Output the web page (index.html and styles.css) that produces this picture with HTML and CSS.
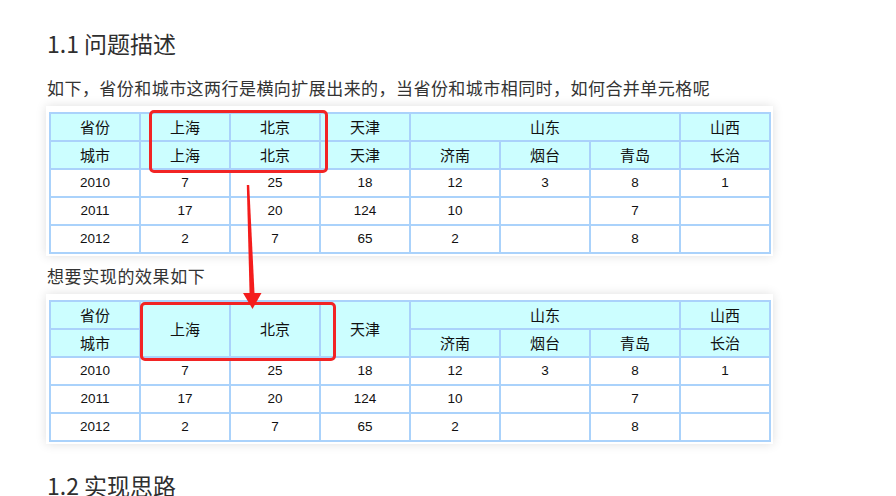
FILE: index.html
```html
<!DOCTYPE html>
<html lang="zh-CN">
<head>
<meta charset="utf-8">
<link rel="stylesheet" href="styles.css">
</head>
<body>
<div class="page">
  <h2 class="heading first">1.1 问题描述</h2>
  <p class="para p1">如下，省份和城市这两行是横向扩展出来的，当省份和城市相同时，如何合并单元格呢</p>
  <div class="figure f1">
    <table class="grid">
      <colgroup><col><col><col><col><col><col><col><col></colgroup>
      <tr class="head"><td>省份</td><td>上海</td><td>北京</td><td>天津</td><td colspan="3">山东</td><td>山西</td></tr>
      <tr class="head"><td>城市</td><td>上海</td><td>北京</td><td>天津</td><td>济南</td><td>烟台</td><td>青岛</td><td>长治</td></tr>
      <tr><td class="n">2010</td><td class="n">7</td><td class="n">25</td><td class="n">18</td><td class="n">12</td><td class="n">3</td><td class="n">8</td><td class="n">1</td></tr>
      <tr><td class="n">2011</td><td class="n">17</td><td class="n">20</td><td class="n">124</td><td class="n">10</td><td class="n"></td><td class="n">7</td><td class="n"></td></tr>
      <tr><td class="n">2012</td><td class="n">2</td><td class="n">7</td><td class="n">65</td><td class="n">2</td><td class="n"></td><td class="n">8</td><td class="n"></td></tr>
    </table>
    <div class="mark mark1"></div>
  </div>
  <p class="para p2">想要实现的效果如下</p>
  <div class="figure f2">
    <table class="grid">
      <colgroup><col><col><col><col><col><col><col><col></colgroup>
      <tr class="head"><td>省份</td><td rowspan="2">上海</td><td rowspan="2">北京</td><td rowspan="2">天津</td><td colspan="3">山东</td><td>山西</td></tr>
      <tr class="head"><td>城市</td><td>济南</td><td>烟台</td><td>青岛</td><td>长治</td></tr>
      <tr><td class="n">2010</td><td class="n">7</td><td class="n">25</td><td class="n">18</td><td class="n">12</td><td class="n">3</td><td class="n">8</td><td class="n">1</td></tr>
      <tr><td class="n">2011</td><td class="n">17</td><td class="n">20</td><td class="n">124</td><td class="n">10</td><td class="n"></td><td class="n">7</td><td class="n"></td></tr>
      <tr><td class="n">2012</td><td class="n">2</td><td class="n">7</td><td class="n">65</td><td class="n">2</td><td class="n"></td><td class="n">8</td><td class="n"></td></tr>
    </table>
    <div class="mark mark2"></div>
  </div>
  <h2 class="heading second">1.2 实现思路</h2>
  <svg class="arrow" width="896" height="496" viewBox="0 0 896 496">
    <polygon points="246.8,185 249.2,185 254.6,295 249.6,295" fill="#f41c1c"/>
    <polygon points="243,293 261.5,293 252.5,309" fill="#f41c1c"/>
  </svg>
</div>
</body>
</html>
```

FILE: styles.css
```css
html, body {
  margin: 0;
  padding: 0;
  background: #ffffff;
}
body {
  font-family: "Noto Sans CJK SC", "Noto Sans", sans-serif;
  color: #333333;
  width: 896px;
  height: 496px;
  overflow: hidden;
}
.page {
  position: relative;
  padding-left: 46px;
  padding-top: 28px;
  height: 496px;
  box-sizing: border-box;
}
.heading {
  margin: 0;
  font-size: 23px;
  line-height: 30px;
  font-weight: 400;
  color: #2f2f2f;
  padding-left: 1px;
}
.heading.second {
  margin-top: 26px;
}
.para {
  margin: 0;
  font-size: 17px;
  line-height: 26px;
  color: #333333;
  letter-spacing: 0.45px;
  padding-left: 1px;
}
.p1 {
  margin-top: 17px;
  margin-bottom: 5px;
}
.p2 {
  margin-top: 7px;
  margin-bottom: 5px;
  letter-spacing: 0.6px;
}
.figure {
  position: relative;
  width: 727px;
  height: 150px;
  box-sizing: border-box;
  padding: 6px 0 0 3px;
  background: #ffffff;
  box-shadow: 0 0 10px rgba(0, 0, 0, 0.13);
}
.grid {
  border-collapse: separate;
  border-spacing: 0;
  table-layout: fixed;
  width: 722px;
  border-left: 2px solid #aad2fb;
  border-top: 2px solid #aad2fb;
}
.grid col {
  width: 90px;
}
.grid td {
  padding: 0;
  height: 26px;
  line-height: 26px;
  text-align: center;
  border-right: 2px solid #aad2fb;
  border-bottom: 2px solid #aad2fb;
  font-size: 15px;
  color: #111111;
  font-family: "Noto Sans CJK SC", sans-serif;
}
.grid .head td {
  background: #ccfeff;
}
.grid td.n {
  font-family: "Liberation Sans", sans-serif;
  font-size: 13.5px;
  background: #ffffff;
}
.mark {
  position: absolute;
  border: 3px solid #f22424;
  border-radius: 5px;
  box-sizing: border-box;
}
.mark1 {
  left: 103px;
  top: 4px;
  width: 179px;
  height: 63px;
}
.mark2 {
  left: 94px;
  top: 8px;
  width: 196px;
  height: 59px;
}
.arrow {
  position: absolute;
  left: 0;
  top: 0;
  pointer-events: none;
}
```
